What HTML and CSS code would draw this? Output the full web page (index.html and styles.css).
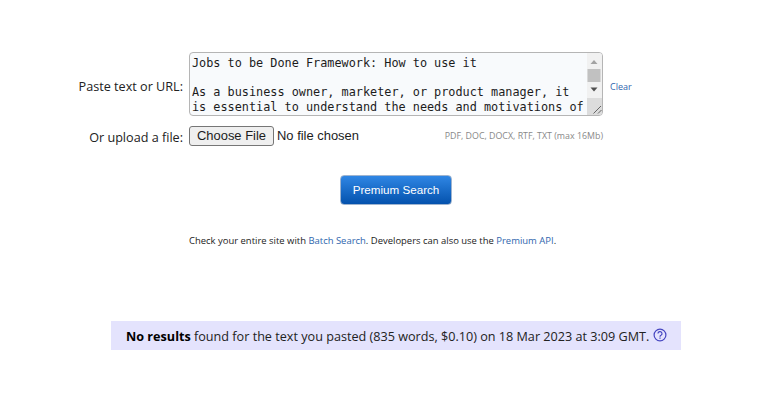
FILE: index.html
```html
<!DOCTYPE html>
<html lang="en">
<head>
<meta charset="utf-8">
<title>Premium Search</title>
<link rel="stylesheet" href="styles.css">
</head>
<body>
<main>
  <form class="search">
    <label class="label">Paste text or URL:</label>
    <div class="textbox">
      <div class="content"><span>Jobs to be Done Framework: How to use it</span>

<span>As a business owner, marketer, or product manager, it</span>
<span>is essential to understand the needs and motivations of</span></div>
      <div class="scroll">
        <svg class="bar" width="15" height="45" viewBox="0 0 15 45"><path d="M0 0h15v45H0z" fill="#f1f1f1"/><path d="M3.5 11 7 7 10.5 11z" fill="#a3a3a3"/><path d="M.5 16h13v13H.5z" fill="#c1c1c1"/><path d="M3.5 34.5h7L7 38.5z" fill="#505050"/></svg>
        <svg class="grip" width="15" height="17" viewBox="0 0 15 17"><path d="M0 0h15v17H0z" fill="#dcdcdc"/><path d="M6.5 15.5 14 8M11 15.5l3.5-3.5" stroke="#666" fill="none"/></svg>
      </div>
    </div>
    <a class="clear">Clear</a>
    <label class="label upload-label">Or upload a file:</label>
    <div class="upload">
      <button type="button" class="choose"><span>Choose File</span></button>
      <span class="chosen">No file chosen</span>
      <span class="formats">PDF, DOC, DOCX, RTF, TXT (max 16Mb)</span>
    </div>
  </form>
  <button type="button" class="submit"><span>Premium Search</span></button>
  <p class="note"><span>Check your entire site with <a>Batch Search</a>. Developers can also use the <a>Premium API</a>.</span></p>
  <div class="banner">
    <span><b>No results</b> found for the text you pasted (835 words, $0.10) on 18 Mar 2023 at 3:09 GMT.</span>
    <svg width="14" height="14" viewBox="0 0 14 14" fill="none" stroke="#4646c0" stroke-width="1.2"><circle cx="7" cy="7" r="5.9"/><path d="M5 5.6a2 1.9 0 1 1 3 1.6Q7 7.7 7 8.7M7 9.6v1.2"/></svg>
  </div>
</main>
</body>
</html>
```
FILE: styles.css
```css
* { box-sizing: border-box; }
body { margin: 0; background: #fff; color: #222; font: 12.64px/18px "Open Sans", sans-serif; }
main { display: flex; flex-direction: column; height: 408px; padding-top: 52px; overflow: hidden; }
a { color: #2f66ae; }
.search { display: grid; grid-template-columns: 183px 414px 60px; grid-template-rows: 64px 22px; column-gap: 6px; row-gap: 9px; align-items: center; }
.label { text-align: right; white-space: nowrap; padding-top: 4px; }
.upload-label { padding-top: 1px; }
.textbox { display: flex; height: 64px; border: 1px solid #b5b5b5; border-radius: 4px; background: #f8fafc; overflow: hidden; }
.content { flex: 1; padding: 3px 0 0 2px; font: 11.84px/14.5px "DejaVu Sans Mono", monospace; color: #1c1c1c; white-space: pre; }
.scroll { display: flex; flex-direction: column; width: 15px; }
.scroll svg { display: block; }
.clear { font-size: 9px; padding: 5px 0 0 1px; }
.upload { display: flex; align-items: center; height: 22px; font: 12.95px/18px "Liberation Sans", sans-serif; }
.choose { width: 85px; height: 20px; padding: 0; border: 1px solid #767676; border-radius: 3px; background: #efefef; color: #1c1c1c; font: inherit; line-height: 18px; white-space: nowrap; }
.chosen { margin-left: 3px; white-space: nowrap; color: #1c1c1c; }
.formats { margin-left: auto; font: 8.85px/14px "Open Sans", sans-serif; color: #888; white-space: nowrap; }
.submit { width: 112px; height: 30px; margin: 28px 0 0 340px; padding: 0; border: 1px solid #9fb4cf; border-radius: 4px; background: linear-gradient(#2f86e4, #0452ad); color: #fff; font: 11.65px/28px "Liberation Sans", sans-serif; white-space: nowrap; }
.note { margin: 29px 0 0 189px; font-size: 9.46px; line-height: 14px; white-space: nowrap; }
.banner { display: flex; align-items: center; gap: 4px; width: 570px; height: 29px; margin: 73px 0 0 111px; padding-left: 15px; background: #e4e3fd; white-space: nowrap; }
.banner b { color: #000; }
.banner svg { margin-top: -1px; }
```
